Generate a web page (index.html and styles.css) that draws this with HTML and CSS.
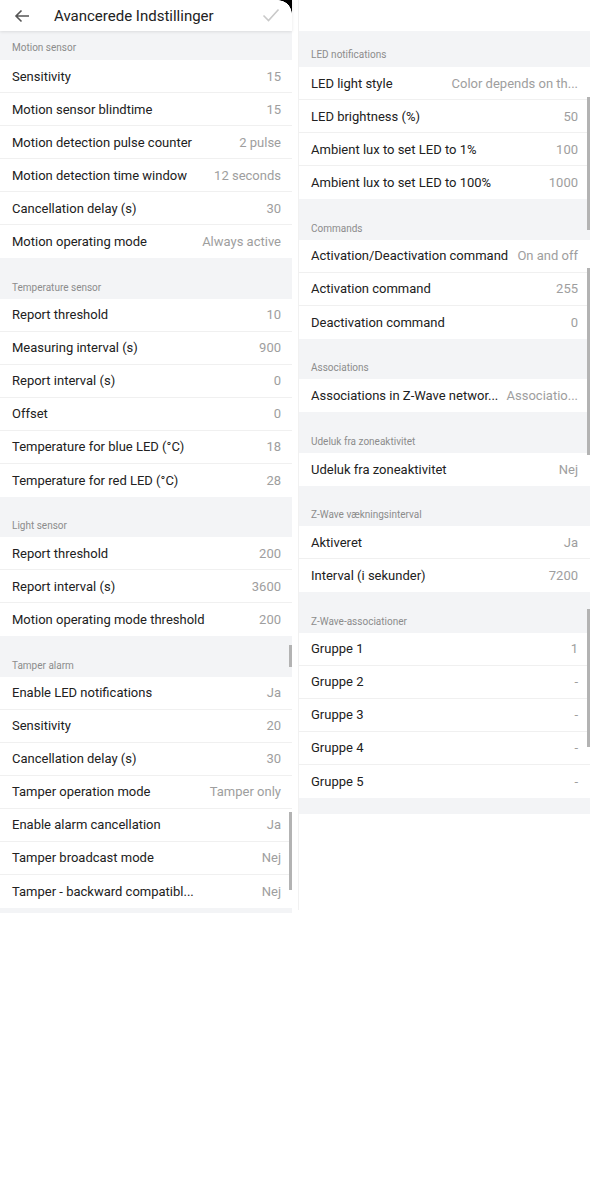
FILE: index.html
```html
<!DOCTYPE html>
<html>
<head>
<meta charset="utf-8">
<link rel="stylesheet" href="styles.css">
</head>
<body>
<div class="page">
  <div class="panel left">
    <div class="corner"></div>
    <div class="appbar">
      <svg class="back" width="16" height="14" viewBox="0 0 16 14"><path d="M15 7H2M7.5 1.5L2 7l5.5 5.5" fill="none" stroke="#555" stroke-width="1.6"/></svg>
      <div class="title">Avancerede Indstillinger</div>
      <svg class="check" width="18" height="14" viewBox="0 0 18 14"><path d="M1.5 7.5l5 5L16.5 1.5" fill="none" stroke="#c9c9c9" stroke-width="1.6"/></svg>
    </div>
    <div class="head first"><span>Motion sensor</span></div>
    <div class="row"><span class="lbl">Sensitivity</span><span class="val">15</span></div>
    <div class="row"><span class="lbl">Motion sensor blindtime</span><span class="val">15</span></div>
    <div class="row"><span class="lbl">Motion detection pulse counter</span><span class="val">2 pulse</span></div>
    <div class="row"><span class="lbl">Motion detection time window</span><span class="val">12 seconds</span></div>
    <div class="row"><span class="lbl">Cancellation delay (s)</span><span class="val">30</span></div>
    <div class="row last"><span class="lbl">Motion operating mode</span><span class="val">Always active</span></div>
    <div class="head"><span>Temperature sensor</span></div>
    <div class="row"><span class="lbl">Report threshold</span><span class="val">10</span></div>
    <div class="row"><span class="lbl">Measuring interval (s)</span><span class="val">900</span></div>
    <div class="row"><span class="lbl">Report interval (s)</span><span class="val">0</span></div>
    <div class="row"><span class="lbl">Offset</span><span class="val">0</span></div>
    <div class="row"><span class="lbl">Temperature for blue LED (°C)</span><span class="val">18</span></div>
    <div class="row last"><span class="lbl">Temperature for red LED (°C)</span><span class="val">28</span></div>
    <div class="head"><span>Light sensor</span></div>
    <div class="row"><span class="lbl">Report threshold</span><span class="val">200</span></div>
    <div class="row"><span class="lbl">Report interval (s)</span><span class="val">3600</span></div>
    <div class="row last"><span class="lbl">Motion operating mode threshold</span><span class="val">200</span></div>
    <div class="head"><span>Tamper alarm</span></div>
    <div class="row"><span class="lbl">Enable LED notifications</span><span class="val">Ja</span></div>
    <div class="row"><span class="lbl">Sensitivity</span><span class="val">20</span></div>
    <div class="row"><span class="lbl">Cancellation delay (s)</span><span class="val">30</span></div>
    <div class="row"><span class="lbl">Tamper operation mode</span><span class="val">Tamper only</span></div>
    <div class="row"><span class="lbl">Enable alarm cancellation</span><span class="val">Ja</span></div>
    <div class="row"><span class="lbl">Tamper broadcast mode</span><span class="val">Nej</span></div>
    <div class="row last"><span class="lbl">Tamper - backward compatibl...</span><span class="val">Nej</span></div>
    <div class="foot-left"></div>
    <div class="sb sb-l1"></div>
    <div class="sb sb-l2"></div>
  </div>
  <div class="panel right">
    <div class="topspace"></div>
    <div class="head rfirst"><span>LED notifications</span></div>
    <div class="row"><span class="lbl">LED light style</span><span class="val">Color depends on th...</span></div>
    <div class="row"><span class="lbl">LED brightness (%)</span><span class="val">50</span></div>
    <div class="row"><span class="lbl">Ambient lux to set LED to 1%</span><span class="val">100</span></div>
    <div class="row last"><span class="lbl">Ambient lux to set LED to 100%</span><span class="val">1000</span></div>
    <div class="head"><span>Commands</span></div>
    <div class="row"><span class="lbl">Activation/Deactivation command</span><span class="val">On and off</span></div>
    <div class="row"><span class="lbl">Activation command</span><span class="val">255</span></div>
    <div class="row last"><span class="lbl">Deactivation command</span><span class="val">0</span></div>
    <div class="head"><span>Associations</span></div>
    <div class="row last"><span class="lbl">Associations in Z-Wave networ...</span><span class="val">Associatio...</span></div>
    <div class="head"><span>Udeluk fra zoneaktivitet</span></div>
    <div class="row last"><span class="lbl">Udeluk fra zoneaktivitet</span><span class="val">Nej</span></div>
    <div class="head"><span>Z-Wave vækningsinterval</span></div>
    <div class="row"><span class="lbl">Aktiveret</span><span class="val">Ja</span></div>
    <div class="row last"><span class="lbl">Interval (i sekunder)</span><span class="val">7200</span></div>
    <div class="head"><span>Z-Wave-associationer</span></div>
    <div class="row"><span class="lbl">Gruppe 1</span><span class="val">1</span></div>
    <div class="row"><span class="lbl">Gruppe 2</span><span class="val">-</span></div>
    <div class="row"><span class="lbl">Gruppe 3</span><span class="val">-</span></div>
    <div class="row"><span class="lbl">Gruppe 4</span><span class="val">-</span></div>
    <div class="row last"><span class="lbl">Gruppe 5</span><span class="val">-</span></div>
    <div class="foot-right"></div>
    <div class="sb sb-r1"></div>
    <div class="sb sb-r2"></div>
    <div class="sb sb-r3"></div>
  </div>
</div>
</body>
</html>
```

FILE: styles.css
```css
* { box-sizing: border-box; }
html, body { margin: 0; padding: 0; background: #ffffff; }
body {
  font-family: Roboto, "Noto Sans", "Liberation Sans", sans-serif;
  color: #212121;
  width: 590px;
  height: 1200px;
}
.page {
  display: flex;
  gap: 6px;
  align-items: flex-start;
}
.panel {
  width: 292px;
  position: relative;
  background: #ffffff;
}
.left { height: 913px; }
.right {
  height: 910px;
  border-left: 1px solid #f1f1f1;
}
.corner {
  position: absolute;
  top: 0;
  right: 0;
  width: 14px;
  height: 14px;
  background: radial-gradient(circle at 0 100%, transparent 13.5px, #000 14px);
  z-index: 3;
}
.appbar {
  height: 31px;
  display: flex;
  align-items: center;
  padding: 0 12px 0 14px;
  background: #fff;
  position: relative;
  z-index: 2;
  box-shadow: 0 1px 3px rgba(0,0,0,0.10);
}
.back { display: block; }
.title {
  margin-left: 24px;
  font-size: 15px;
  color: #222;
  flex: 1;
}
.check { display: block; margin-top: -2px; }
.topspace { height: 31px; background: #fff; }
.head {
  height: 40.6px;
  background: #f3f4f6;
  display: flex;
  align-items: flex-end;
  padding: 0 12px 5px;
  font-size: 10px;
  line-height: 12px;
  color: #8c8c8c;
}
.head.first { height: 29px; padding-bottom: 6px; }
.head.rfirst { height: 36px; padding-bottom: 6px; }
.row {
  height: 33px;
  display: flex;
  align-items: center;
  justify-content: space-between;
  padding: 0 11px 0 12px;
  border-bottom: 1px solid #f0f0f0;
  font-size: 13px;
  background: #fff;
}
.right .row { padding: 0 12px 0 12px; }
.row.last { border-bottom: none; }
.lbl { color: #212121; white-space: nowrap; }
.val { color: #9e9e9e; white-space: nowrap; }
.foot-left { height: 5px; background: #f3f4f6; }
.foot-right { height: 16px; background: #f3f4f6; }
.sb {
  position: absolute;
  width: 3px;
  background: #b3b3b3;
  right: 0;
}
.sb-l1 { top: 645px; height: 22px; }
.sb-l2 { top: 812px; height: 78px; }
.sb-r1 { top: 97px; height: 133px; }
.sb-r2 { top: 268px; height: 187px; }
.sb-r3 { top: 609px; height: 138px; }
```
